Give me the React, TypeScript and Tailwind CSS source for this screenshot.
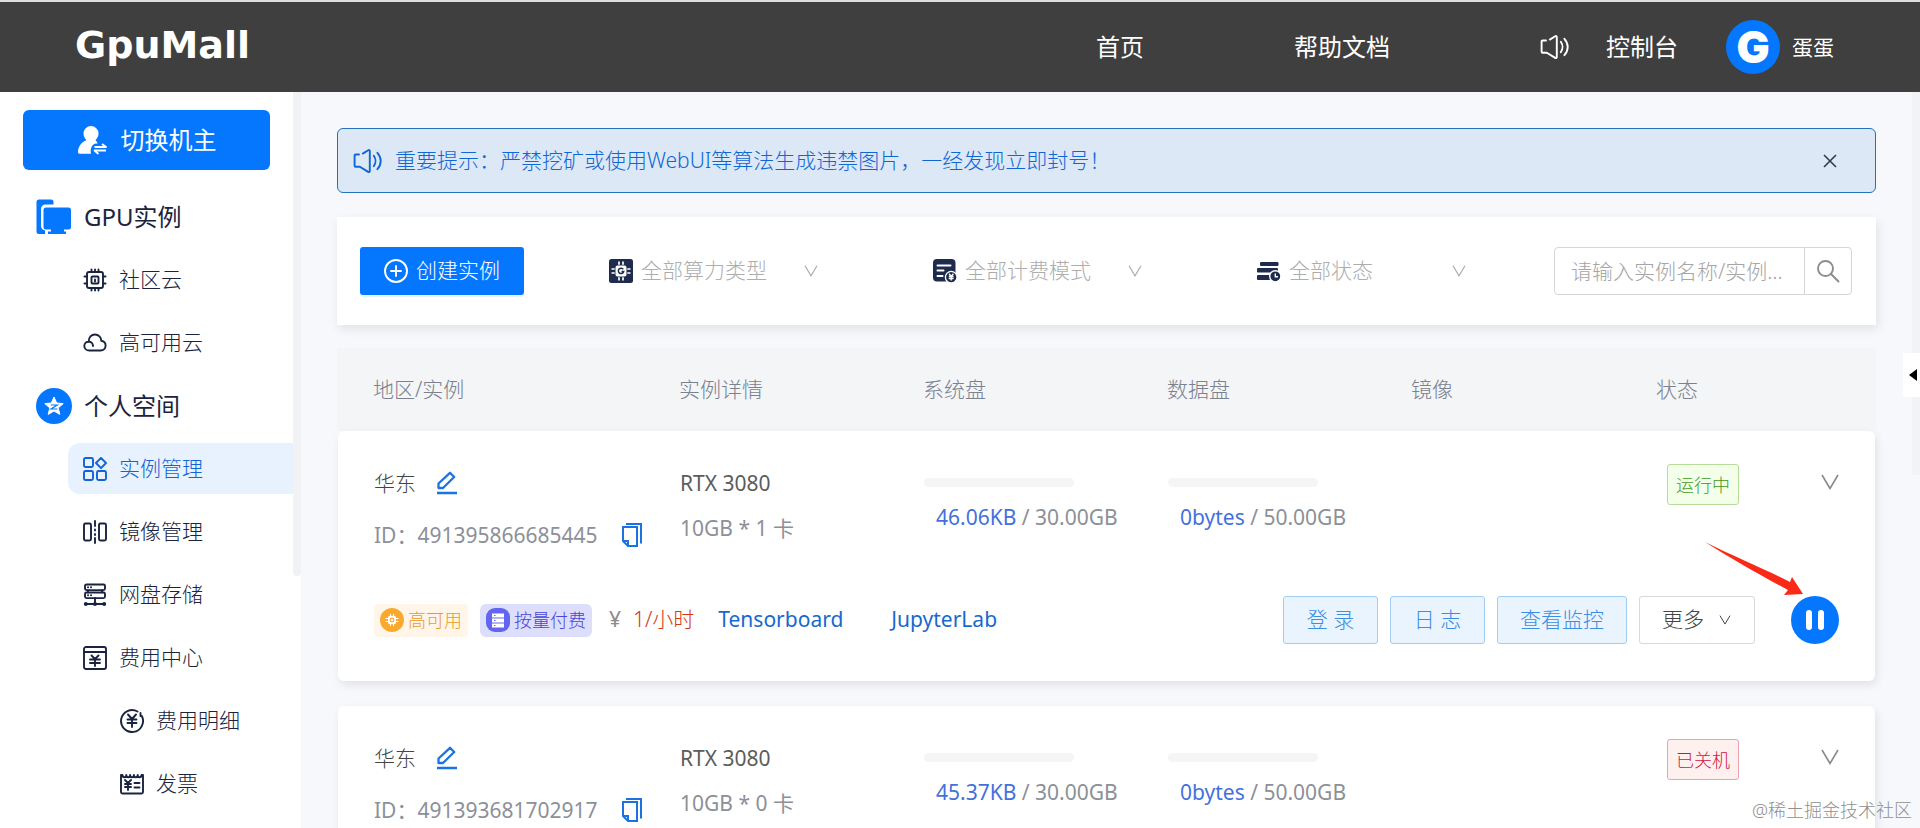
import React from "react";
import clsx from "clsx";

type IconProps = { className?: string };

type Instance = {
  id: string;
  region: string;
  gpu: string;
  spec: string;
  systemUsed: string;
  systemTotal: string;
  dataUsed: string;
  dataTotal: string;
  running: boolean;
};

const instances: Instance[] = [
  {
    id: "491395866685445",
    region: "华东",
    gpu: "RTX 3080",
    spec: "10GB * 1 卡",
    systemUsed: "46.06KB",
    systemTotal: "30.00GB",
    dataUsed: "0bytes",
    dataTotal: "50.00GB",
    running: true,
  },
  {
    id: "491393681702917",
    region: "华东",
    gpu: "RTX 3080",
    spec: "10GB * 0 卡",
    systemUsed: "45.37KB",
    systemTotal: "30.00GB",
    dataUsed: "0bytes",
    dataTotal: "50.00GB",
    running: false,
  },
];

const Svg: React.FC<IconProps & { children: React.ReactNode }> = ({
  className = "size-6",
  children,
}) => (
  <svg
    viewBox="0 0 24 24"
    fill="none"
    stroke="currentColor"
    strokeWidth="1.9"
    strokeLinecap="round"
    strokeLinejoin="round"
    aria-hidden="true"
    className={clsx("shrink-0", className)}
  >
    {children}
  </svg>
);

const SoundIcon: React.FC<IconProps> = ({ className }) => (
  <svg
    viewBox="0 0 30 26"
    fill="none"
    stroke="currentColor"
    strokeWidth="1.9"
    strokeLinecap="round"
    strokeLinejoin="round"
    aria-hidden="true"
    className={clsx("h-[26px] w-[30px] shrink-0", className)}
  >
    <path d="M6 6.5H2.6a1 1 0 0 0-1 1v10.2a1 1 0 0 0 1 1H6.8l8.4 5.2a1 1 0 0 0 1.6-.9V3a1 1 0 0 0-1.6-.8L9.8 5.6" />
    <path d="M20.8 7.8c2.2 3 2.2 7.4 0 10.4" />
    <path d="M24.4 4.8c4.4 4.8 4.4 11.6 0 16.4" />
  </svg>
);

const CpuIcon = () => (
  <Svg>
    <rect x="4" y="4" width="16" height="16" rx="2" />
    <rect x="8.5" y="8.5" width="7" height="7" rx="1" />
    <path d="M12 11.5v2M8.5 1.5V4M12 1.5V4M15.5 1.5V4M8.5 20v2.5M12 20v2.5M15.5 20v2.5M1.5 8.5H4M1.5 15.5H4M20 8.5h2.5M20 15.5h2.5" />
  </Svg>
);

const CloudIcon = () => (
  <Svg>
    <path d="M5.7 10.7C5.5 6.3 8.5 3.5 12 3.5s6.3 2.8 6.3 6.3c2.7.5 4.3 2.3 4.3 4.7 0 2.9-2 5-5 5H6.3c-2.9 0-5-2-5-4.6 0-2.5 1.9-4.2 4.4-4.2 2.6 0 4.3 1.7 4.3 4.3" />
  </Svg>
);

const AppsIcon = () => (
  <Svg>
    <rect x="1" y="1" width="9" height="9" rx="1.5" />
    <rect x="1" y="14" width="9" height="9" rx="1.5" />
    <rect x="14" y="14" width="9" height="9" rx="1.5" />
    <path d="M18 .9 23 6l-5 5.1L13 6z" />
  </Svg>
);

const MirrorIcon = () => (
  <Svg>
    <rect x="1" y="3.5" width="7" height="17" rx="1.5" />
    <rect x="16" y="3.5" width="7" height="17" rx="1.5" />
    <path d="M12 1v5M12 9.5v1M12 14v1M12 18v5" />
  </Svg>
);

const ServerIcon = () => (
  <Svg>
    <rect x="2" y="1.5" width="20" height="5.6" rx="1.5" />
    <rect x="2" y="9.5" width="20" height="5.6" rx="1.5" />
    <path d="M5 7.2v2.2M19 7.2v2.2M12 15v5.5M2.5 21h19M5 4.3h.1M8 4.3h.1M5 12.3h.1M8 12.3h.1" />
    <g fill="currentColor" stroke="none">
      <circle cx="2.8" cy="21" r="2" />
      <circle cx="12" cy="21" r="2" />
      <circle cx="21.2" cy="21" r="2" />
    </g>
  </Svg>
);

const BillIcon = () => (
  <Svg>
    <rect x="1" y="1" width="22" height="22" rx="2" />
    <path d="M1 6h22M8.5 9.5l3.5 3.5 3.5-3.5M12 13v7M7 13.5h10M7 17h10" />
  </Svg>
);

const CoinIcon = () => (
  <Svg>
    <path d="M17.5 2.5A11 11 0 1 0 21.8 7M20.5 4v3" />
    <path d="M8 5.5l4 4.5 4-4.5M12 10v8M7.5 10.5h9M7.5 14h9" />
  </Svg>
);

const InvoiceIcon = () => (
  <Svg>
    <path d="M2.5 3H1v17a1.5 1.5 0 0 0 1.5 1.5h19A1.5 1.5 0 0 0 23 20V3h-1.5c0 3-3.8 3-3.8 0 0 3-3.8 3-3.8 0 0 3-3.8 3-3.8 0 0 3-3.8 3-3.8 0 0 3-3.8 3-3.8 0z" />
    <path d="M5 8l3 3 3-3M8 11v7M5 12h6M5 15h6M14.5 11h5M14.5 15.5h5" />
  </Svg>
);

const SwitchUserIcon = () => (
  <svg viewBox="0 0 30 30" fill="currentColor" aria-hidden="true" className="size-[30px]">
    <path d="M14 1a7.5 7.5 0 0 0-7.5 7.5c0 2.6 1.2 4.9 3 6.4C4.5 17 1 21.5 1 27c0 1 .5 1.7 1.5 1.7H14c-.8-3.5-.2-8.5 4.5-10.2h2.2c-.7-1.5-1.4-2.7-2.2-3.6 1.8-1.5 3-3.8 3-6.4A7.5 7.5 0 0 0 14 1z" />
    <path
      d="M17.5 22H29l-4-3M29 25.5H17.5l4 3.5"
      fill="none"
      stroke="currentColor"
      strokeWidth="1.8"
      strokeLinejoin="round"
    />
  </svg>
);

const ScreensIcon = () => (
  <svg viewBox="0 0 36 36" fill="#0577ff" aria-hidden="true" className="size-9 shrink-0">
    <path d="M3 .5h12a2.5 2.5 0 0 1 2.5 2.5v2.5H9.5a4.5 4.5 0 0 0-4.5 4.5v16.5a5 5 0 0 0 4 5V35H3A2.5 2.5 0 0 1 .5 32.5V3A2.5 2.5 0 0 1 3 .5z" />
    <path d="M10 8.5h22.5A2.5 2.5 0 0 1 35 11v17a2.5 2.5 0 0 1-2.5 2.5H28v2h2V35H12v-2.5h3v-2h-5A2.5 2.5 0 0 1 7.5 28V11A2.5 2.5 0 0 1 10 8.5z" />
  </svg>
);

const StarIcon = () => (
  <svg viewBox="0 0 36 36" aria-hidden="true" className="size-9 shrink-0">
    <circle cx="18" cy="18" r="18" fill="#0577ff" />
    <path
      d="M18 9l2.7 6 6.5.6-5 4.3 1.6 6.5L18 23l-5.8 3.4 1.6-6.5-5-4.3 6.5-.6z"
      fill="#fff"
      stroke="#fff"
      strokeLinejoin="round"
    />
    <path d="M14.8 17h6.5l-6.3 4h6.5" fill="none" stroke="#0577ff" strokeWidth="1.2" />
  </svg>
);

const ChipSolidIcon = () => (
  <svg viewBox="0 0 24 24" aria-hidden="true" className="size-6 shrink-0">
    <rect width="24" height="24" rx="2.5" fill="#1f2b4d" />
    <path
      d="M10 2.5v19M14 2.5v19M2.5 10h19M2.5 14h19"
      stroke="#fff"
      strokeWidth="1.7"
      strokeDasharray="3.2 12.6"
    />
    <rect x="6.5" y="6.5" width="11" height="11" rx="2" fill="#fff" />
    <path d="M14.3 10.3a2.7 2.7 0 1 0 .4 2.2h-2.2" fill="none" stroke="#1f2b4d" strokeWidth="1.5" />
  </svg>
);

const BillingSolidIcon = () => (
  <svg viewBox="0 0 24 24" aria-hidden="true" className="size-6 shrink-0">
    <rect width="22.5" height="22.5" rx="4" fill="#1f2b4d" />
    <path d="M4.5 6.5h13M4.5 11.5h6M4.5 17h5" stroke="#fff" strokeWidth="2" strokeLinecap="round" />
    <circle cx="18.2" cy="18.2" r="5.8" fill="#1f2b4d" stroke="#fff" strokeWidth="1.3" />
    <path d="M16 14.8l2.2 2.4 2.2-2.4M18.2 17v4.5M15.8 17.5h4.8M15.8 19.5h4.8" fill="none" stroke="#fff" strokeWidth="1.3" />
  </svg>
);

const StatusSolidIcon = () => (
  <svg viewBox="0 0 24 24" fill="#1f2b4d" aria-hidden="true" className="size-6 shrink-0">
    <rect x="3" y="3" width="18.5" height="4" rx="1" />
    <rect x="0" y="9" width="21" height="4.5" rx="1" />
    <rect x="0" y="16" width="16" height="5" rx="1" />
    <circle cx="18.3" cy="17.3" r="5.6" stroke="#fff" strokeWidth="1.4" />
    <path d="M18.3 14.5v3.3h2.7" fill="none" stroke="#fff" strokeWidth="1.4" />
  </svg>
);

const ChevronIcon: React.FC<IconProps> = ({ className }) => (
  <svg
    viewBox="0 0 18 16"
    fill="none"
    stroke="currentColor"
    strokeWidth="1.6"
    aria-hidden="true"
    className={clsx("shrink-0", className)}
  >
    <path d="M1 1l8 13.5L17 1" />
  </svg>
);

const EditIcon = () => (
  <svg viewBox="0 0 22 24" fill="none" stroke="currentColor" strokeWidth="2.3" aria-hidden="true" className="h-6 w-[22px]">
    <path d="M2.5 17v-4.5L14 1.8l4.2 4.2L7 17zM1 22h20" strokeLinejoin="round" />
  </svg>
);

const CopyIcon = () => (
  <svg viewBox="0 0 20 24" fill="none" stroke="currentColor" strokeWidth="2" aria-hidden="true" className="h-6 w-5">
    <path d="M4 1h15v19.5" />
    <path d="M1 4h14v19H6l-5-5zM1 18h5v5" />
  </svg>
);

const menu = [
  { label: "GPU实例", icon: ScreensIcon, level: 1 },
  { label: "社区云", icon: CpuIcon, level: 2 },
  { label: "高可用云", icon: CloudIcon, level: 2 },
  { label: "个人空间", icon: StarIcon, level: 1 },
  { label: "实例管理", icon: AppsIcon, level: 2, active: true },
  { label: "镜像管理", icon: MirrorIcon, level: 2 },
  { label: "网盘存储", icon: ServerIcon, level: 2 },
  { label: "费用中心", icon: BillIcon, level: 2 },
  { label: "费用明细", icon: CoinIcon, level: 3 },
  { label: "发票", icon: InvoiceIcon, level: 3 },
];

const filters = [
  { label: "全部算力类型", icon: ChipSolidIcon },
  { label: "全部计费模式", icon: BillingSolidIcon },
  { label: "全部状态", icon: StatusSolidIcon },
];

const Header = () => (
  <header className="flex h-[92px] shrink-0 items-center border-t-2 border-[#dcdddd] bg-[#3f3f3f] pr-[86px] pl-[75px] text-white">
    <a href="#" className="mb-1 font-['DejaVu_Sans'] text-[38px] leading-none font-bold">
      GpuMall
    </a>
    <nav className="ml-auto flex items-center text-2xl">
      <a href="#" className="mr-[150px]">首页</a>
      <a href="#" className="mr-[150px]">帮助文档</a>
      <button type="button" aria-label="通知" className="mr-9">
        <SoundIcon />
      </button>
      <a href="#" className="mr-12">控制台</a>
      <a href="#" className="flex items-center gap-3 text-[21px]">
        <span className="flex size-[54px] items-center justify-center rounded-full bg-[#0577ff] font-['Inter'] text-[44px] leading-none font-black">
          G
        </span>
        蛋蛋
      </a>
    </nav>
  </header>
);

const Sidebar = () => (
  <aside className="relative w-[301px] shrink-0 bg-white pt-[18px] pr-2">
    <button
      type="button"
      className="ml-[23px] flex h-[60px] w-[247px] items-center justify-center gap-3.5 rounded-md bg-[#0577ff] text-2xl text-white"
    >
      <SwitchUserIcon />
      切换机主
    </button>
    <ul className="mt-[21px] space-y-3 text-[#1a2440]">
      {menu.map(({ label, icon: Icon, level, active }) => (
        <li
          key={label}
          className={clsx(level === 1 && "pl-6", level === 2 && "pl-[68px]", level === 3 && "pl-[105px]")}
        >
          <a
            href="#"
            className={clsx(
              "flex h-[51px] items-center gap-3 rounded-l-xl",
              level === 1 ? "pl-3 text-2xl" : "pl-[15px] text-[21px] font-light",
              active && "bg-[#e7f2fe] text-[#1263d6]"
            )}
          >
            <Icon />
            {label}
          </a>
        </li>
      ))}
    </ul>
    <div className="absolute top-0 right-0 h-[484px] w-2 rounded-b bg-[#f0f2f3]" />
  </aside>
);

const Notice = () => (
  <div className="flex h-[65px] items-center rounded-md border border-[#2472bd] bg-[#dce8f5] pr-[38px] pl-[15px] text-[#0f66d6]">
    <SoundIcon />
    <p className="ml-3 text-[21px] font-light">
      重要提示：严禁挖矿或使用WebUI等算法生成违禁图片，一经发现立即封号！
    </p>
    <button type="button" aria-label="关闭" className="ml-auto text-[#333c48]">
      <svg viewBox="0 0 14 14" stroke="currentColor" strokeWidth="1.6" className="size-3.5">
        <path d="M1 1l12 12M13 1L1 13" />
      </svg>
    </button>
  </div>
);

const FilterBar = () => (
  <div className="mt-6 flex h-[108px] items-center bg-white pr-6 pl-[23px] shadow-[2px_4px_10px_rgba(0,0,0,0.09)]">
    <button
      type="button"
      className="flex h-12 w-[164px] items-center justify-center gap-2 rounded-[3px] bg-[#0577ff] text-[21px] font-light text-white shadow-[0_2px_0_rgba(5,145,255,0.1)]"
    >
      <Svg>
        <circle cx="12" cy="12" r="11" />
        <path d="M12 7v10M7 12h10" />
      </Svg>
      创建实例
    </button>
    <div className="ml-[85px] flex gap-[114px]">
      {filters.map(({ label, icon: Icon }) => (
        <label key={label} className="flex items-center text-[#adadad]">
          <Icon />
          <span className="relative ml-2 flex w-[178px] items-center">
            <select
              aria-label={label}
              className="w-full appearance-none bg-transparent text-[21px] font-light outline-none"
            >
              <option>{label}</option>
            </select>
            <ChevronIcon className="pointer-events-none absolute right-0 h-3 w-4" />
          </span>
        </label>
      ))}
    </div>
    <form className="ml-auto flex">
      <input
        type="text"
        aria-label="搜索实例"
        placeholder="请输入实例名称/实例编号"
        className="h-12 w-[251px] rounded-l border border-[#d6d6d6] pr-3 pl-4 text-[21px] font-light text-ellipsis outline-none placeholder:text-[#a6a6a6]"
      />
      <button
        type="button"
        aria-label="搜索"
        className="-ml-px flex h-12 w-12 items-center justify-center rounded-r border border-[#d6d6d6] text-[#8c8c8c]"
      >
        <Svg>
          <circle cx="9.5" cy="9.5" r="7.5" />
          <path d="M15 15l7.5 7.5" />
        </Svg>
      </button>
    </form>
  </div>
);

type DiskProps = { label: string; used: string; total: string };

const Disk: React.FC<DiskProps> = ({ label, used, total }) => (
  <td className="block pt-[47px]">
    <div role="img" aria-label={label} className="h-[9px] w-[150px] rounded-full bg-[#f5f5f5]" />
    <p className="mt-4 pl-3 text-[#8c9097]">
      <span className="text-[#4470dc]">{used}</span> / {total}
    </p>
  </td>
);

const InstanceCard: React.FC<{ item: Instance }> = ({ item }) => (
  <tbody className="mx-px mb-[25px] block h-[250px] rounded-md bg-white px-9 shadow-[2px_4px_10px_rgba(0,0,0,0.09)]">
    <tr className="grid grid-cols-[306fr_244fr_244fr_244fr_245fr_182fr] leading-7">
      <td className="block pt-9">
        <div className="flex h-8 items-center gap-5 font-light text-[#444]">
          {item.region}
          <button type="button" aria-label="编辑" className="text-[#1a73e0]">
            <EditIcon />
          </button>
        </div>
        <div className="mt-5 flex h-8 items-center gap-6 text-[#8c9099]">
          <span>ID：{item.id}</span>
          <button type="button" aria-label="复制" className="text-[#1a73e0]">
            <CopyIcon />
          </button>
        </div>
      </td>
      <td className="block pt-[38px]">
        <p className="text-[#5c5c5c]">{item.gpu}</p>
        <p className="mt-[17px] text-[#8c9099]">{item.spec}</p>
      </td>
      <Disk label="系统盘" used={item.systemUsed} total={item.systemTotal} />
      <Disk label="数据盘" used={item.dataUsed} total={item.dataTotal} />
      <td className="block" />
      <td className="flex items-start justify-between pt-[33px] pl-2.5">
        <span
          className={clsx(
            "flex h-[41px] items-center rounded-[3px] border px-2 text-lg font-light",
            item.running
              ? "border-[#b7dc9a] bg-[#f4ffea] text-[#3f9a1c]"
              : "border-[#e9a3b1] bg-[#fff0f0] text-[#cf1440]"
          )}
        >
          {item.running ? "运行中" : "已关机"}
        </span>
        <button type="button" aria-label="展开" className="mt-2.5 text-[#8a8a8a]">
          <ChevronIcon className="h-4 w-[18px]" />
        </button>
      </td>
    </tr>
    {item.running && (
      <tr className="mt-[45px] block">
        <td colSpan={6} className="flex h-12 items-center">
          <span className="flex h-[33px] items-center gap-1 rounded bg-[#fff6e9] px-1.5 text-lg font-light text-[#ea9a28]">
            <svg viewBox="0 0 24 24" aria-hidden="true" className="size-6">
              <circle cx="12" cy="12" r="12" fill="#faa92f" />
              <path
                d="M10.5 6v12M13.5 6v12M5.5 10.5h13M5.5 13.5h13"
                stroke="#fff"
                strokeWidth="1.2"
              />
              <rect x="8" y="8" width="8" height="8" rx="1.5" fill="#fff" />
              <circle cx="12" cy="12" r="1.8" fill="none" stroke="#faa92f" strokeWidth="1.2" />
            </svg>
            高可用
          </span>
          <span className="ml-3 flex h-[33px] items-center gap-1 rounded-md bg-[#dddefb] px-1.5 text-lg font-light text-[#4a45d8]">
            <svg viewBox="0 0 24 24" aria-hidden="true" className="size-6">
              <rect width="24" height="24" rx="9" fill="#6265f0" />
              <path d="M6 7.5h12M6 12.5h12M6 17.5h12" stroke="#fff" strokeWidth="4" />
              <path d="M8 7.5h1.5M8 12.5h1.5M8 17.5h1.5" stroke="#6265f0" strokeWidth="1" />
            </svg>
            按量付费
          </span>
          <span className="ml-[17px] text-[#8c8c8c]">¥</span>
          <span className="ml-3 font-light text-[#cf3a14]">1/小时</span>
          <a href="#" className="ml-6 text-[#1669cf]">Tensorboard</a>
          <a href="#" className="ml-12 text-[#1669cf]">JupyterLab</a>
          <div className="ml-auto flex gap-3 font-light">
            {["登 录", "日 志", "查看监控"].map((text) => (
              <button
                key={text}
                type="button"
                className="h-12 min-w-[95px] rounded-[3px] border border-[#a3cdf3] bg-[#eaf4ff] px-[22px] text-[#3a8ee6]"
              >
                {text}
              </button>
            ))}
            <button
              type="button"
              className="flex h-12 items-center gap-3.5 rounded-[3px] border border-[#d9d9d9] px-[22px] text-[#444]"
            >
              更多
              <ChevronIcon className="h-2.5 w-3.5" />
            </button>
          </div>
          <button
            type="button"
            aria-label="暂停"
            className="relative ml-9 flex size-12 items-center justify-center gap-1.5 rounded-full bg-[#0577ff]"
          >
            <span className="h-5 w-[6px] rounded-full bg-white" />
            <span className="h-5 w-[6px] rounded-full bg-white" />
            <svg viewBox="0 0 100 56" aria-hidden="true" className="absolute right-[34px] bottom-[46px] h-14 w-[100px]">
              <path d="M0 0C30 15 60 27 85 40l2-5 11 17-19 1 4-5C55 33 30 19 0 0z" fill="#fb2a16" />
            </svg>
          </button>
        </td>
      </tr>
    )}
  </tbody>
);

const App: React.FC = () => {
  return (
    <div className="flex h-screen flex-col overflow-hidden bg-[#f6f8fc] font-['Noto_Sans','Noto_Sans_CJK_SC',sans-serif]">
      <Header />
      <div className="relative flex min-h-0 flex-1">
        <Sidebar />
        <main className="min-w-0 flex-1 overflow-hidden pt-9 pr-11 pl-9">
          <Notice />
          <FilterBar />
          <table className="mt-[23px] block text-[21px]">
            <thead className="block bg-[#f3f5f7]">
              <tr className="grid h-[83px] grid-cols-[306fr_244fr_244fr_244fr_245fr_184fr] items-center px-9 text-left text-[#7a818f]">
                {["地区/实例", "实例详情", "系统盘", "数据盘", "镜像", "状态"].map((name) => (
                  <th key={name} className="font-light">
                    {name}
                  </th>
                ))}
              </tr>
            </thead>
            {instances.map((item) => (
              <InstanceCard key={item.id} item={item} />
            ))}
          </table>
        </main>
        <div className="absolute top-0 right-0 h-[383px] w-2 bg-[#f1f3f4]" />
        <button
          type="button"
          aria-label="收起"
          className="absolute top-[261px] right-0 flex h-11 w-[17px] items-center bg-white pl-1.5"
        >
          <svg viewBox="0 0 8 12" aria-hidden="true" className="h-3 w-2">
            <path d="M8 0v12L0 6z" fill="#000" />
          </svg>
        </button>
        <p className="absolute right-2 bottom-1 text-lg font-light text-[#8f8f8f]">@稀土掘金技术社区</p>
      </div>
    </div>
  );
};

export default App;
